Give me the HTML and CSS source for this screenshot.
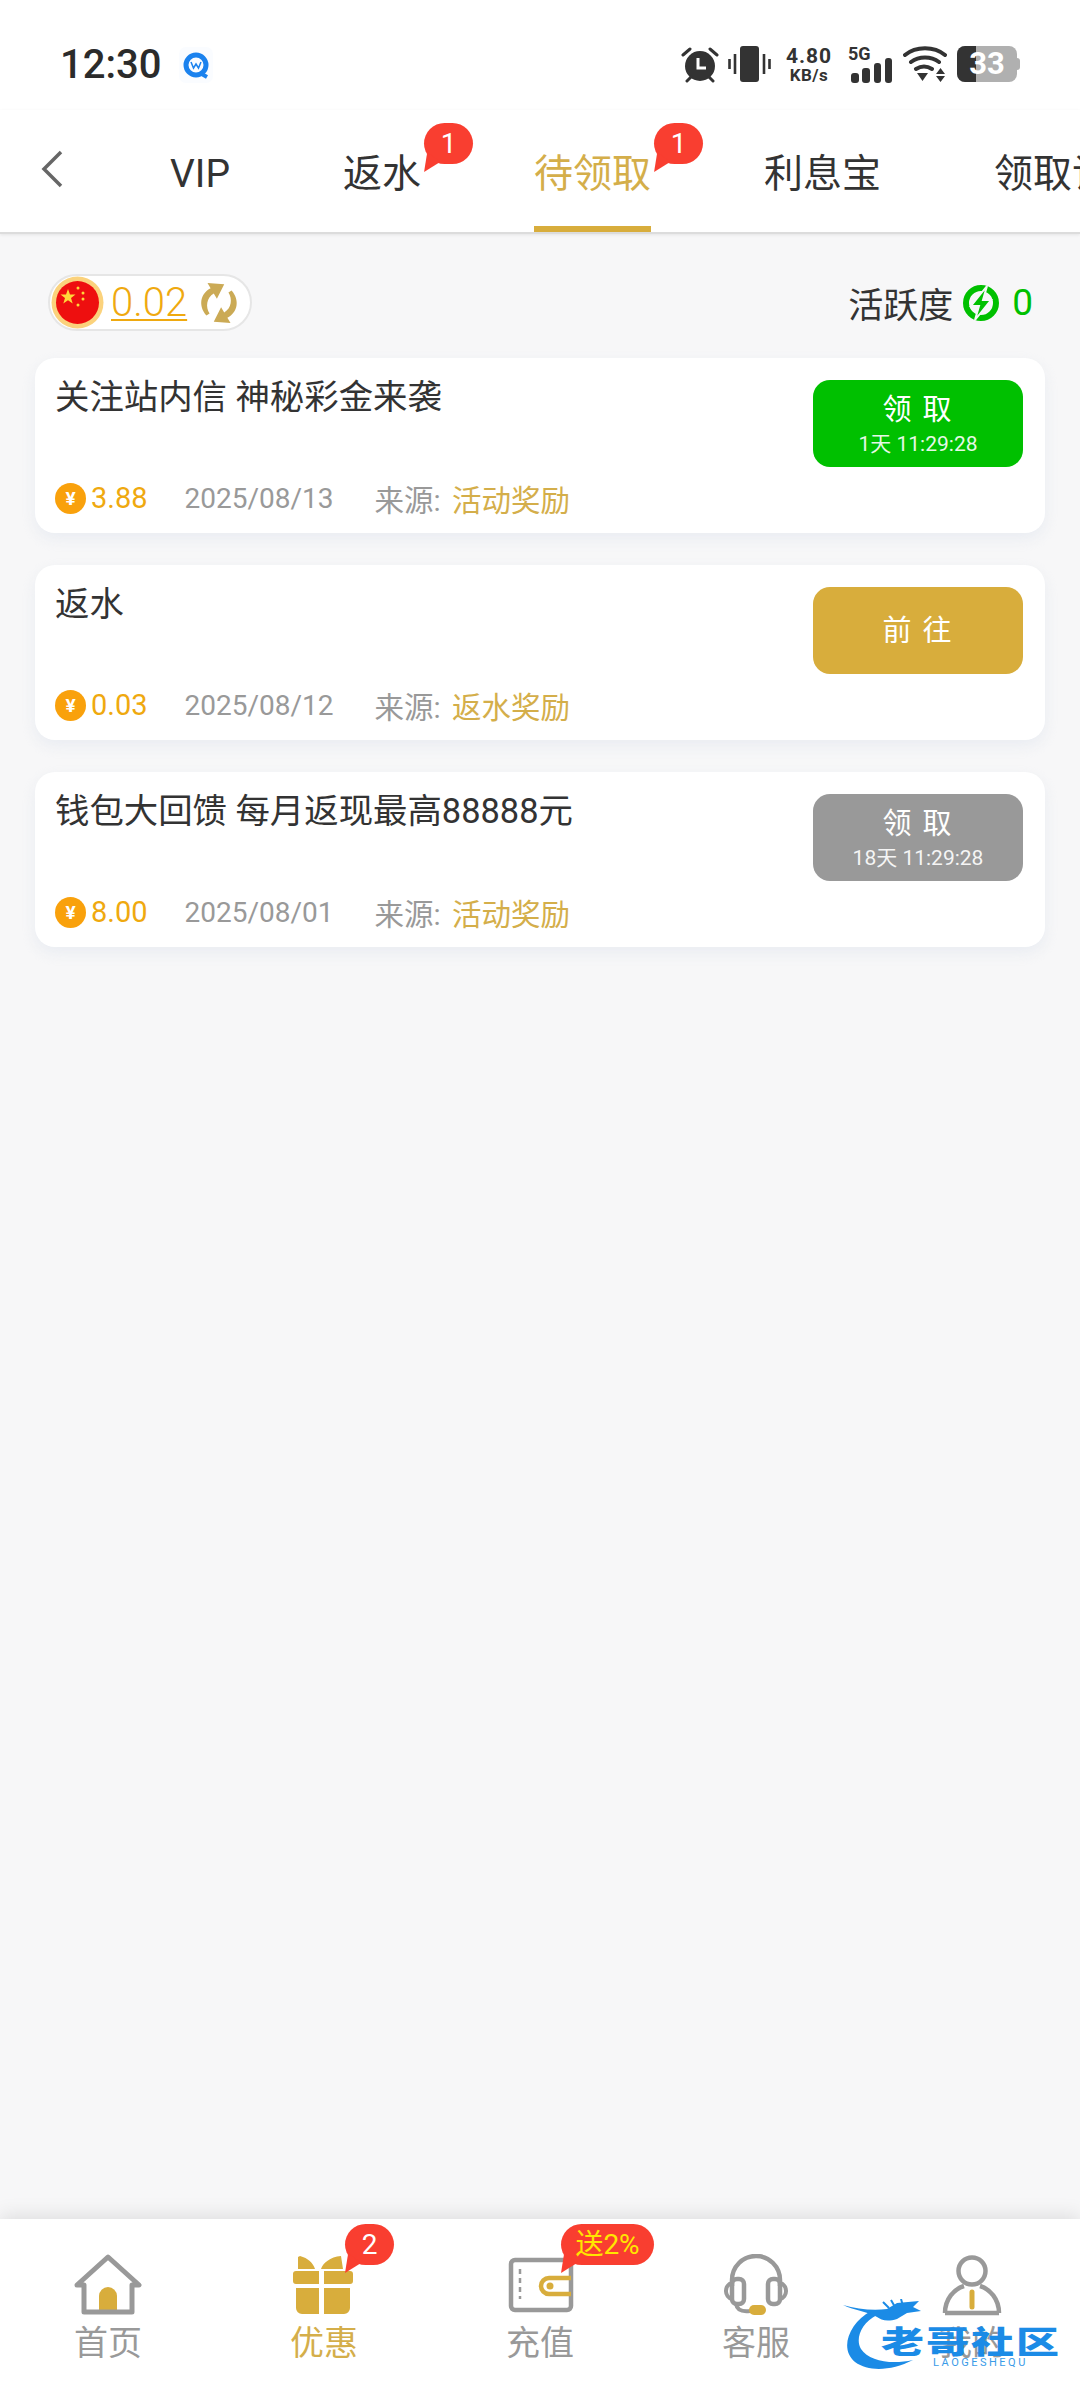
FILE: index.html
```html
<!DOCTYPE html>
<html lang="zh-CN">
<head>
  <meta charset="UTF-8">
  <title>待领取</title>
  <link rel="stylesheet" href="styles.css">
</head>
<body>
  <div class="statusbar">
    <div class="status-left">
      <span class="time">12:30</span>
      <svg class="app-icon" width="34" height="36" viewBox="0 0 34 36">
        <rect width="34" height="36" rx="7" fill="#fafcff"/>
        <circle cx="17" cy="18" r="10" fill="none" stroke="#1b82ee" stroke-width="5"/>
        <path d="M21 26l7 4" stroke="#1b82ee" stroke-width="4"/>
        <path d="M12 15l2.500 6 2.500-4 2.500 4 2.500-6" fill="none" stroke="#1b82ee" stroke-width="1.500"/>
      </svg>
    </div>
    <div class="status-right">
      <svg class="alarm" width="38" height="37" viewBox="0 0 38 37">
        <circle cx="19" cy="20" r="15" fill="#333"/>
        <path d="M17 12v10h8" fill="none" stroke="#fff" stroke-width="3"/>
        <path d="M2 9l7-6M36 9l-7-6M6 35l4-4M32 35l-4-4" stroke="#333" stroke-width="3" stroke-linecap="round"/>
      </svg>
      <svg class="gap-vib" width="43" height="37" viewBox="0 0 43 37">
        <rect x="12" y="0" width="19" height="36" rx="3" fill="#333"/>
        <path d="M1.500 13v10M7 8v20M36 8v20M41.500 13v10" stroke="#333" stroke-width="2.600"/>
      </svg>
      <div class="speed"><span>4.80</span><span class="speed-unit">KB/s</span></div>
      <div class="signal">
        <span class="five-g">5G</span>
        <svg width="41" height="25" viewBox="0 0 41 25">
          <rect x="0" y="15" width="8" height="10" rx="3" fill="#333"/>
          <rect x="11" y="10" width="8" height="15" rx="3" fill="#333"/>
          <rect x="23" y="5" width="7" height="20" rx="3" fill="#333"/>
          <rect x="34" y="0" width="7" height="25" rx="3" fill="#333"/>
        </svg>
      </div>
      <svg width="44" height="37" viewBox="0 0 44 37">
        <path d="M2 9c11-9 29-9 40 0M8 16c8-6 20-6 28 0M13 23c5-3 11-3 16 0" fill="none" stroke="#333" stroke-width="4" stroke-linecap="round"/>
        <path d="M14 27h11l-5.500 8zM33 28l4.500-6 4.500 6zM33 30h9l-4.500 6z" fill="#333"/>
      </svg>
      <div class="battery"><span class="battery-level"></span><span class="battery-num">33</span></div>
    </div>
  </div>

  <header class="topnav">
    <svg class="back" width="24" height="38" viewBox="0 0 24 38">
      <path d="M21 2L4 19l17 17" fill="none" stroke="#666" stroke-width="3.500"/>
    </svg>
    <nav class="tabs">
      <a class="tab">VIP</a>
      <a class="tab">返水<span class="badge">1</span></a>
      <a class="tab active">待领取<span class="badge">1</span></a>
      <a class="tab">利息宝</a>
      <a class="tab">领取记录</a>
    </nav>
  </header>

  <main class="content">
    <div class="summary">
      <div class="wallet-pill">
        <svg width="53" height="53" viewBox="0 0 53 53">
          <circle cx="26.500" cy="26.500" r="26" fill="#fbd27c"/>
          <circle cx="26.500" cy="26.500" r="21.500" fill="#ee0f0f"/>
          <path d="M17 13l2 5.500h5.500l-4.500 3.500 1.700 5.500-4.700-3.300-4.700 3.300 1.700-5.500-4.500-3.500h5.500z" fill="#ffd83a"/>
          <circle cx="27" cy="12" r="1.500" fill="#ffd83a"/>
          <circle cx="32" cy="17" r="1.500" fill="#ffd83a"/>
          <circle cx="32" cy="23" r="1.500" fill="#ffd83a"/>
          <circle cx="27" cy="29" r="1.500" fill="#ffd83a"/>
        </svg>
        <span class="balance">0.02</span>
        <svg width="44" height="44" viewBox="0 0 42 42">
          <path d="M9 33C1 24 3 12 13 7l-3-5 16 1-7 14-3-5c-7 4-8 13-4 19z" fill="#cbaa55"/>
          <path d="M33 9c8 9 6 21-4 26l3 5-16-1 7-14 3 5c7-4 8-13 4-19z" fill="#cbaa55"/>
        </svg>
      </div>
      <div class="activity">
        <span>活跃度</span>
        <svg width="36" height="36" viewBox="0 0 36 36">
          <circle cx="18" cy="18" r="15" fill="none" stroke="#00c000" stroke-width="6"/>
          <path d="M24 1L8 21h8l-4 14 16-20h-8z" fill="#00c000" stroke="#f7f7f8" stroke-width="2"/>
        </svg>
        <span class="activity-num">0</span>
      </div>
    </div>

    <section class="card">
      <div class="card-body">
        <div class="card-title">关注站内信 神秘彩金来袭</div>
        <div class="card-meta">
          <span class="coin">¥</span><span class="amount">3.88</span>
          <span class="date">2025/08/13</span>
          <span class="source">来源: <em>活动奖励</em></span>
        </div>
      </div>
      <button class="btn btn-green"><span class="btn-label">领 取</span><span class="btn-timer">1天 11:29:28</span></button>
    </section>

    <section class="card">
      <div class="card-body">
        <div class="card-title">返水</div>
        <div class="card-meta">
          <span class="coin">¥</span><span class="amount">0.03</span>
          <span class="date">2025/08/12</span>
          <span class="source">来源: <em>返水奖励</em></span>
        </div>
      </div>
      <button class="btn btn-gold"><span class="btn-label">前 往</span></button>
    </section>

    <section class="card">
      <div class="card-body">
        <div class="card-title">钱包大回馈 每月返现最高88888元</div>
        <div class="card-meta">
          <span class="coin">¥</span><span class="amount">8.00</span>
          <span class="date">2025/08/01</span>
          <span class="source">来源: <em>活动奖励</em></span>
        </div>
      </div>
      <button class="btn btn-grey"><span class="btn-label">领 取</span><span class="btn-timer">18天 11:29:28</span></button>
    </section>
  </main>

  <footer class="bottomnav">
    <a class="nav-item">
      <svg width="68" height="62" viewBox="0 0 68 62">
        <path d="M25 60V42a9 9 0 0 1 18 0v18z" fill="#d8ad3c"/>
        <path d="M3 31L34 3l31 28h-7v27H10V31z" fill="none" stroke="#999" stroke-width="5" stroke-linejoin="round"/>
      </svg>
      <span>首页</span>
    </a>
    <a class="nav-item current">
      <svg width="68" height="62" viewBox="0 0 68 62">
        <path d="M10 2c8 2 13 7 15 13H8V3zM31 15c2-6 9-12 20-13l2 13z" fill="#d8ad3c"/>
        <path d="M6 17h23v13H6a3 3 0 0 1-3-3v-7a3 3 0 0 1 3-3zM34 17h26a3 3 0 0 1 3 3v7a3 3 0 0 1-3 3H34z" fill="#d8ad3c"/>
        <path d="M6 34h23v26H12a6 6 0 0 1-6-6zM34 34h26v20a6 6 0 0 1-6 6H34z" fill="#d8ad3c"/>
      </svg>
      <span>优惠</span>
      <b class="badge nav-badge">2</b>
    </a>
    <a class="nav-item">
      <svg width="68" height="62" viewBox="0 0 68 62">
        <rect x="5" y="6" width="60" height="50" rx="4" fill="none" stroke="#999" stroke-width="4.500"/>
        <path d="M14 15v30" stroke="#999" stroke-width="2.500" stroke-dasharray="5 4"/>
        <path d="M65 24H43a8 8 0 0 0 0 16h22" fill="none" stroke="#d8ad3c" stroke-width="4.500"/>
        <circle cx="44" cy="32" r="3.500" fill="#d8ad3c"/>
      </svg>
      <span>充值</span>
      <b class="badge nav-badge promo">送2%</b>
    </a>
    <a class="nav-item">
      <svg width="68" height="62" viewBox="0 0 68 62">
        <path d="M10 32V26a24 24 0 0 1 48 0v6" fill="none" stroke="#999" stroke-width="4.500"/>
        <rect x="10" y="25" width="12" height="25" rx="5" fill="none" stroke="#999" stroke-width="4.500"/>
        <rect x="46" y="25" width="12" height="25" rx="5" fill="none" stroke="#999" stroke-width="4.500"/>
        <path d="M10 29a8 8 0 0 0-6 8 8 8 0 0 0 6 8M58 29a8 8 0 0 1 6 8 8 8 0 0 1-6 8" fill="none" stroke="#999" stroke-width="4"/>
        <path d="M14 50c1 6 6 8 14 7" fill="none" stroke="#999" stroke-width="4"/>
        <rect x="27" y="51" width="17" height="10" rx="5" fill="#d8ad3c"/>
      </svg>
      <span>客服</span>
    </a>
    <a class="nav-item">
      <svg width="68" height="62" viewBox="0 0 68 62">
        <circle cx="34" cy="17" r="13.500" fill="none" stroke="#999" stroke-width="4.500"/>
        <path d="M7 59c0-14 9-24 19-27M61 59c0-14-9-24-19-27M7 59h54" fill="none" stroke="#999" stroke-width="4.500"/>
        <path d="M34 38v15" stroke="#d8ad3c" stroke-width="5" stroke-linecap="round"/>
      </svg>
      <span>我的</span>
    </a>
    <div class="watermark">
      <svg width="100" height="72" viewBox="0 0 100 72">
        <path d="M28 12C6 24-4 50 12 63c14 10 36 9 58-2C48 66 26 62 18 50 12 40 18 24 34 16z" fill="#1b8be6"/>
        <path d="M0 6c14 4 30 6 44 4l10-6 22-2-6 6 8 4-14 2-10 6c-10 3-16 1-20-2C24 12 12 12 0 6z" fill="#1b8be6"/>
        <path d="M40 3l6 6M48 1l4 7M58 0l2 7" stroke="#1b8be6" stroke-width="2"/>
      </svg>
      <div class="wm-name">老哥社区</div>
      <div class="wm-sub">LAOGESHEQU</div>
    </div>
  </footer>
</body>
</html>
```

FILE: styles.css
```css
* {
  box-sizing: border-box;
}

body {
  margin: 0;
  height: 2400px;
  width: 1080px;
  overflow: hidden;
  display: flex;
  flex-direction: column;
  background-color: #f7f7f8;
  font-family: Roboto, "Noto Sans CJK SC", sans-serif;
  color: #333;
}

/* status bar */
.statusbar {
  height: 110px;
  flex-shrink: 0;
  background-color: #fff;
  display: flex;
  justify-content: space-between;
  align-items: flex-start;
  padding: 46px 60px 0 60px;
}

.status-left {
  display: flex;
  align-items: center;
  gap: 18px;
}

.time {
  font-size: 40px;
  line-height: 37px;
  font-weight: 500;
  color: #2b2b2b;
}

.status-right {
  display: flex;
  align-items: flex-start;
  gap: 10px;
}

.alarm {
  margin-right: -1px;
}

.gap-vib {
  margin-right: 3px;
}

.speed {
  width: 50px;
  display: flex;
  flex-direction: column;
  align-items: center;
  font-size: 21px;
  line-height: 21px;
  font-weight: 700;
  letter-spacing: 1px;
  color: #333;
  margin-right: 4px;
}

.speed-unit {
  font-size: 17px;
  line-height: 17px;
  letter-spacing: 0.5px;
}

.signal {
  width: 44px;
  position: relative;
  height: 37px;
  display: flex;
  align-items: flex-end;
  justify-content: flex-end;
  margin-right: 1px;
}

.five-g {
  position: absolute;
  left: 0;
  top: -1px;
  font-size: 18px;
  line-height: 18px;
  font-weight: 700;
}

.battery {
  position: relative;
  width: 60px;
  height: 36px;
  margin-right: 3px;
  border-radius: 8px;
  background-color: #b0b0b0;
  text-align: center;
}

.battery::after {
  content: "";
  position: absolute;
  right: -3px;
  top: 12px;
  width: 3px;
  height: 12px;
  border-radius: 0 3px 3px 0;
  background-color: #b0b0b0;
}

.battery-level {
  position: absolute;
  left: 0;
  top: 0;
  width: 19px;
  height: 36px;
  border-radius: 8px 0 0 8px;
  background-color: #333;
}

.battery-num {
  position: relative;
  font-size: 31px;
  line-height: 36px;
  font-weight: 700;
  color: #fff;
}

/* top tabs */
.topnav {
  height: 124px;
  flex-shrink: 0;
  background-color: #fff;
  display: flex;
  border-bottom: 2px solid #dcdcdc;
  box-shadow: 0 1px 3px rgba(0, 0, 0, 0.08);
}

.back {
  margin: 40px 0 0 40px;
  flex-shrink: 0;
}

.tabs {
  flex: 1;
  display: flex;
  gap: 113px;
  padding-left: 106px;
  overflow: hidden;
}

.tab {
  position: relative;
  flex-shrink: 0;
  height: 123px;
  line-height: 129px;
  font-size: 39px;
  color: #333;
  white-space: nowrap;
}

.tab.active {
  color: #d4ae4a;
  border-bottom: 7px solid #d8ad3c;
}

.badge {
  position: absolute;
  left: calc(100% + 3px);
  top: 13px;
  min-width: 49px;
  height: 41px;
  border-radius: 21px;
  background-color: #f93e30;
  color: #fff;
  font-size: 28px;
  line-height: 41px;
  font-weight: 400;
  text-align: center;
}

.badge::after {
  content: "";
  position: absolute;
  left: 0;
  bottom: -8px;
  width: 16px;
  height: 20px;
  background-color: #f93e30;
  clip-path: polygon(0 100%, 100% 50%, 20% 0);
}

/* main list */
.content {
  flex: 1;
  padding: 0 35px;
}

.summary {
  height: 124px;
  display: flex;
  justify-content: space-between;
  align-items: flex-start;
  padding: 40px 12px 0 13px;
}

.wallet-pill {
  width: 204px;
  height: 57px;
  display: flex;
  align-items: center;
  padding-left: 1px;
  background-color: #fff;
  border: 2px solid #e6e6e6;
  border-radius: 29px;
}

.balance {
  margin: 0 10px 0 7px;
  font-size: 40px;
  font-weight: 300;
  color: #efa90f;
  text-decoration: underline;
  text-underline-offset: 3px;
  text-decoration-thickness: 2px;
}

.activity {
  display: flex;
  align-items: center;
  height: 57px;
  font-size: 35px;
  color: #333;
}

.activity svg {
  margin: 0 13px 0 10px;
}

.activity-num {
  font-size: 37px;
  color: #00c000;
}

.card {
  height: 175px;
  margin-bottom: 32px;
  padding: 22px 22px 17px 20px;
  display: flex;
  justify-content: space-between;
  background-color: #fff;
  border-radius: 20px;
  box-shadow: 0 6px 14px rgba(225, 230, 238, 0.6);
}

.card-body {
  display: flex;
  flex-direction: column;
  justify-content: space-between;
}

.card-title {
  font-size: 34.400px;
  line-height: 34px;
  color: #333;
}

.card-meta {
  display: flex;
  align-items: center;
  height: 36px;
  font-size: 28px;
  color: #999;
}

.coin {
  width: 31px;
  height: 31px;
  border-radius: 50%;
  background-color: #f9a10c;
  color: #fff;
  font-size: 19px;
  font-weight: 700;
  line-height: 31px;
  text-align: center;
}

.amount {
  margin: 0 37px 0 5px;
  font-size: 29px;
  color: #efa90f;
}

.date {
  margin-right: 41px;
}

.source {
  font-size: 29.500px;
}

.source em {
  margin-left: 4px;
  font-style: normal;
  color: #d4ae4a;
}

.btn {
  width: 210px;
  height: 87px;
  padding: 0;
  border: none;
  border-radius: 17px;
  color: #fff;
  font-family: inherit;
  display: flex;
  flex-direction: column;
  align-items: center;
  justify-content: center;
}

.btn-label {
  font-size: 29px;
  line-height: 40px;
  letter-spacing: 2px;
  white-space: pre;
}

.btn-timer {
  font-size: 21px;
  line-height: 28px;
  opacity: 0.9;
}

.btn-green {
  background-color: #00c000;
}

.btn-gold {
  background-color: #d8ad3c;
}

.btn-grey {
  background-color: #999;
}

/* bottom navigation */
.bottomnav {
  position: relative;
  height: 181px;
  flex-shrink: 0;
  background-color: #fff;
  display: grid;
  grid-template-columns: repeat(5, 216px);
  box-shadow: 0 -4px 18px rgba(0, 0, 0, 0.1);
}

.nav-item {
  position: relative;
  display: flex;
  flex-direction: column;
  align-items: center;
  padding-top: 35px;
  font-size: 34px;
  line-height: 40px;
  color: #999;
}

.nav-item span {
  margin-top: 7px;
}

.nav-item.current {
  color: #d4ae4a;
}

.nav-badge {
  left: 129px;
  top: 5px;
}

.promo {
  left: 129px;
  width: 93px;
  color: #ffe600;
}

.watermark {
  position: absolute;
  left: 843px;
  top: 80px;
  width: 225px;
  height: 76px;
  color: #1b8be6;
}

.watermark svg {
  position: absolute;
  left: 0;
  top: 0;
}

.wm-name {
  position: absolute;
  left: 38px;
  top: 18px;
  font-size: 43px;
  line-height: 50px;
  font-weight: 900;
  letter-spacing: 2px;
  white-space: nowrap;
  transform: scaleY(0.72);
}

.wm-sub {
  position: absolute;
  left: 90px;
  top: 58px;
  font-size: 11px;
  line-height: 12px;
  letter-spacing: 2.500px;
  white-space: nowrap;
  color: #3a9be8;
}
```
